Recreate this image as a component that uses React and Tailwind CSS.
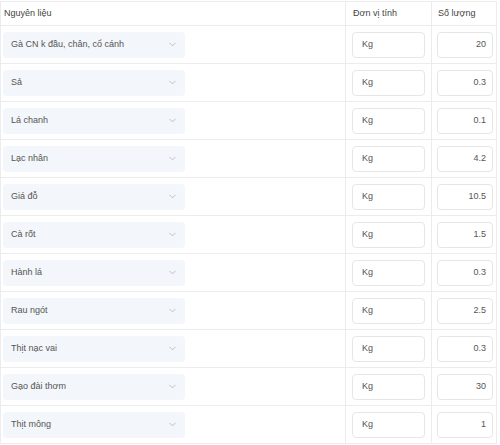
import { ChevronDown } from 'lucide-react'

const ROWS = [
  ['Gà CN k đầu, chân, cổ cánh', '20'],
  ['Sả', '0.3'],
  ['Lá chanh', '0.1'],
  ['Lạc nhân', '4.2'],
  ['Giá đỗ', '10.5'],
  ['Cà rốt', '1.5'],
  ['Hành lá', '0.3'],
  ['Rau ngót', '2.5'],
  ['Thịt nạc vai', '0.3'],
  ['Gạo đài thơm', '30'],
  ['Thịt mông', '1'],
]

const COLS = 'grid grid-cols-[344px_86px_66px]'

export default function App() {
  return (
    <div className="w-[500px] h-[445px] overflow-hidden bg-white font-[Arial,Liberation_Sans,sans-serif] text-[9px] text-[#555]">
      <div className="mt-px w-[497px] border-l border-[#ececec]">
        {/* header */}
        <div className={`${COLS} h-[25px] border-y border-[#ececec] text-[#444]`}>
          <div className="flex items-center pl-[3px]">Nguyên liệu</div>
          <div className="flex items-center pl-[7px] border-l border-[#ececec]">Đơn vị tính</div>
          <div className="flex items-center pl-[6px] border-x border-[#ececec]">Số lượng</div>
        </div>

        {ROWS.map(([name, qty]) => (
          <div key={name} className={`${COLS} h-[38px] border-b border-[#ececec]`}>
            <div className="flex items-center pl-[2px]">
              <div className="w-[182px] h-[26px] rounded-[4px] bg-[#f3f6fa] flex items-center justify-between pl-[8px] pr-[7px]">
                <span>{name}</span>
                <ChevronDown size={11} strokeWidth={1.5} className="text-[#a3a8b0]" />
              </div>
            </div>
            <div className="flex items-center pl-[6px] border-l border-[#ececec]">
              <div className="w-[73px] h-[26px] rounded-[4px] border border-[#e6e6e6] flex items-center pl-[9px]">
                Kg
              </div>
            </div>
            <div className="flex items-center pl-[5px] border-x border-[#ececec]">
              <div className="w-[56px] h-[26px] rounded-[4px] border border-[#e6e6e6] flex items-center justify-end pr-[6px]">
                {qty}
              </div>
            </div>
          </div>
        ))}
      </div>
    </div>
  )
}
